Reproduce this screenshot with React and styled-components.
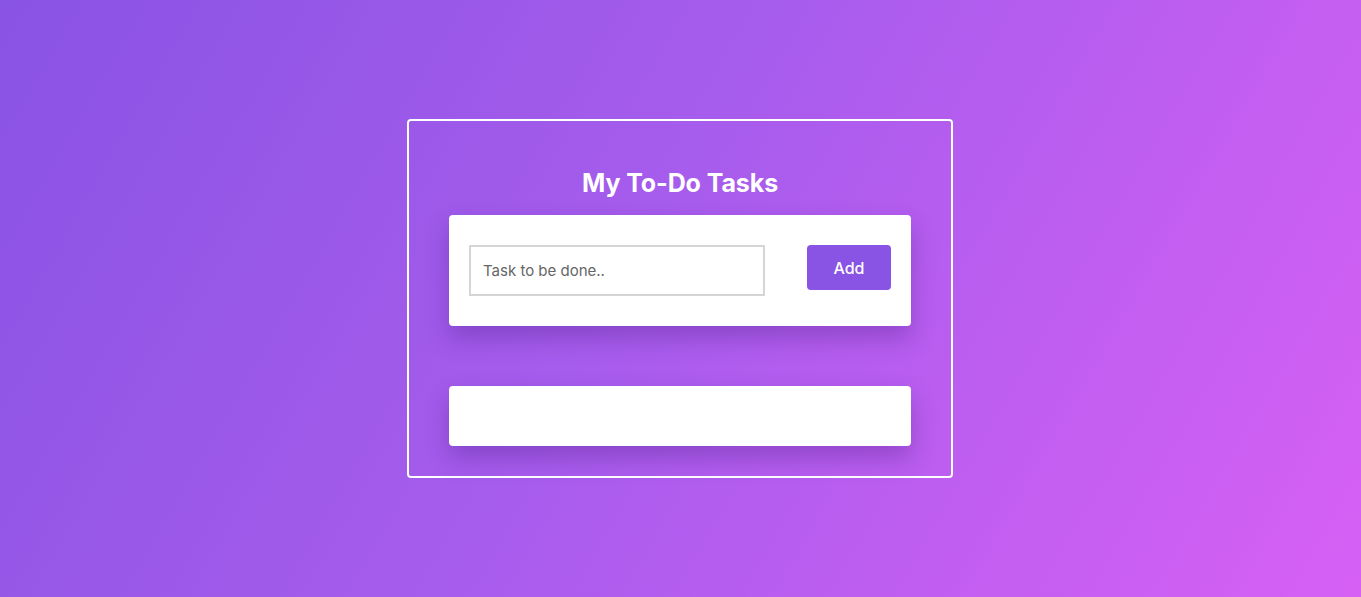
import React from 'react'
import styled, { createGlobalStyle } from 'styled-components'

const GlobalStyle = createGlobalStyle`
    * {
        box-sizing: border-box;
    }
    html, body {
        margin: 0;
        padding: 0;
        height: 100%;
    }
    body {
        font-family: Inter, "Open Sans", sans-serif;
        background: linear-gradient(120deg, #8953e4 0%, #a65cec 45%, #d760f5 100%);
    }
    #root {
        height: 100%;
    }
`

const Page = styled.main`
    display: flex;
    align-items: center;
    justify-content: center;
    width: 100%;
    height: 597px;
    padding-right: 1px;
`
const Frame = styled.section`
    display: flex;
    flex-direction: column;
    align-items: center;
    width: 546px;
    height: 359px;
    padding: 44px 40px 29px;
    border: 2px solid #ffffff;
    border-radius: 4px;
`
const Title = styled.h1`
    margin: 0 0 14px;
    font-size: 25px;
    line-height: 36px;
    font-weight: 700;
    color: #ffffff;
    letter-spacing: -0.1px;
`
const Card = styled.div`
    display: flex;
    justify-content: space-between;
    align-items: flex-start;
    width: 462px;
    height: ${props => props.tall ? "111px" : "60px"};
    margin-top: ${props => props.space ? "60px" : "0"};
    padding: 30px 20px;
    background: #ffffff;
    border-radius: 4px;
    box-shadow: 0 12px 24px rgba(60, 20, 120, 0.3);
`
const Input = styled.input`
    width: 296px;
    height: 51px;
    padding: 0 12px;
    border: 2px solid #d5d5d5;
    outline: none;
    font-family: Inter, "Open Sans", sans-serif;
    font-size: 15px;
    color: #333;
    &::placeholder {
        color: #666666;
    }
`
const Button = styled.button`
    width: 84px;
    height: 45px;
    border: none;
    border-radius: 4px;
    background: #8953e4;
    color: #ffffff;
    font-family: Inter, "Open Sans", sans-serif;
    font-size: 16px;
    font-weight: 500;
    cursor: pointer;
`

const App = () => {
    return(
        <>
            <GlobalStyle/>
            <Page>
                <Frame>
                    <Title>My To-Do Tasks</Title>
                    <Card tall>
                        <Input placeholder="Task to be done.."/>
                        <Button>Add</Button>
                    </Card>
                    <Card space/>
                </Frame>
            </Page>
        </>
    )
}

export default App
